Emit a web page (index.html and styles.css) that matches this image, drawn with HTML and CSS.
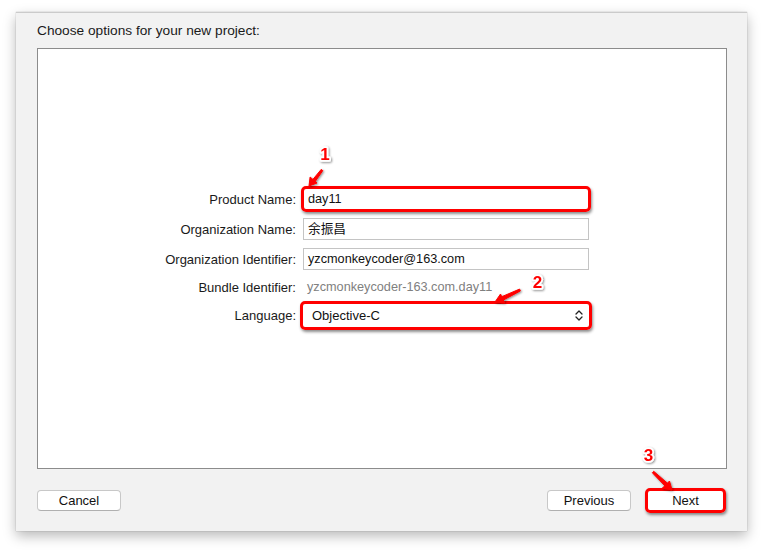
FILE: index.html
```html
<!DOCTYPE html>
<html>
<head>
<meta charset="utf-8">
<link rel="stylesheet" href="styles.css">
</head>
<body>
<div class="window">
  <div class="title">Choose options for your new project:</div>
  <div class="panel">
    <div class="form">
      <div class="label">Product Name:</div>
      <div class="field ring">day11</div>
      <div class="label">Organization Name:</div>
      <div class="field">余振昌</div>
      <div class="label">Organization Identifier:</div>
      <div class="field">yzcmonkeycoder@163.com</div>
      <div class="label">Bundle Identifier:</div>
      <div class="static">yzcmonkeycoder-163.com.day11</div>
      <div class="label">Language:</div>
      <div class="popup ring">
        <span>Objective-C</span>
        <svg class="chev" width="8" height="13" viewBox="0 0 8 13"><path d="M1 5 L4 2 L7 5 M1 8 L4 11 L7 8" fill="none" stroke="#222" stroke-width="1.3" stroke-linecap="round" stroke-linejoin="round"/></svg>
      </div>
    </div>
  </div>
  <div class="buttons">
    <div class="btn">Cancel</div>
    <div class="spacer"></div>
    <div class="btn">Previous</div>
    <div class="btn next ring">Next</div>
  </div>
</div>
<svg class="annot" width="764" height="552" viewBox="0 0 764 552">
  <defs>
    <filter id="sh" x="-50%" y="-50%" width="200%" height="200%">
      <feDropShadow dx="1" dy="1" stdDeviation="0.8" flood-color="#000" flood-opacity="0.45"/>
    </filter>
  </defs>
  <g filter="url(#sh)" fill="#f00" stroke="#f00">
    <polygon points="322.8,170.6 321.2,169.4 312,180.5 314.5,182.5" stroke-width="1" stroke-linejoin="round"/>
    <polygon points="309,186 317,183 310.1,177" stroke-width="1"/>
    <polygon points="520.4,290.9 519.6,289.1 501,297 502.5,300.5" stroke-width="1" stroke-linejoin="round"/>
    <polygon points="495,302 504.5,302.8 500.5,294" stroke-width="1"/>
    <polygon points="652.3,472.7 653.7,471.3 667.5,483.2 665,486" stroke-width="1" stroke-linejoin="round"/>
    <polygon points="672,490 662.5,488 669.5,481" stroke-width="1"/>
  </g>
  <g class="num" filter="url(#sh)">
    <text x="325" y="159.5">1</text>
    <text x="537.5" y="288">2</text>
    <text x="648.5" y="461">3</text>
  </g>
</svg>
</body>
</html>
```
FILE: styles.css
```css
html, body {
  margin: 0;
  padding: 0;
  background: #ffffff;
  width: 764px;
  height: 552px;
  overflow: hidden;
  font-family: "Liberation Sans", Arial, "Noto Sans CJK SC", sans-serif;
  font-size: 13px;
  color: #000;
}
.window {
  position: relative;
  margin: 12px 0 0 16px;
  width: 731px;
  height: 519px;
  box-sizing: border-box;
  background: #f2f2f2;
  border-top: 1px solid #cbcbcb;
  padding: 10px 20px 0 21px;
  box-shadow: 0 5px 12px rgba(0,0,0,0.28), 0 0 1px rgba(0,0,0,0.3);
}
.title {
  height: 16px;
  line-height: 16px;
  margin-bottom: 9px;
  font-size: 13.7px;
  color: #1a1a1a;
}
.panel {
  width: 690px;
  height: 421px;
  box-sizing: border-box;
  background: #fff;
  border: 1px solid #8c8c8c;
  padding-top: 139px;
}
.form {
  display: grid;
  grid-template-columns: 258px 286px;
  grid-template-rows: 22px 22px 22px 18px 23px;
  column-gap: 7px;
  row-gap: 8px;
}
.label {
  text-align: right;
  display: flex;
  align-items: center;
  justify-content: flex-end;
  color: #1a1a1a;
}
.field {
  position: relative;
  box-sizing: border-box;
  height: 22px;
  line-height: 20px;
  background: #fff;
  border: 1px solid #c4c4c4;
  padding: 0 4px;
  color: #111;
  font-size: 12.7px;
}
.static {
  display: flex;
  align-items: center;
  padding-left: 4px;
  font-size: 12.7px;
  color: #808080;
}
.popup {
  position: relative;
  box-sizing: border-box;
  height: 23px;
  background: #fff;
  border-radius: 3px;
  display: flex;
  align-items: center;
  justify-content: space-between;
  padding: 0 6px 0 9px;
  color: #111;
}
.chev { display: block; }
.ring::after {
  content: "";
  position: absolute;
  left: -3px;
  right: -3px;
  top: -3px;
  bottom: -3px;
  border: 3px solid #ff0000;
  border-radius: 5px;
  box-shadow: 1px 2px 3px rgba(0,0,0,0.45);
  pointer-events: none;
}
.buttons {
  display: flex;
  margin-top: 21px;
  padding-right: 3px;
  gap: 16px;
}
.spacer { flex: 1; }
.btn {
  position: relative;
  box-sizing: border-box;
  width: 84px;
  height: 21px;
  line-height: 19px;
  text-align: center;
  background: #fff;
  border: 1px solid #c8c8c8;
  border-bottom-color: #b0b0b0;
  border-radius: 4px;
  color: #111;
}
.btn.next {
  width: 77px;
  border-color: #fff;
}
.annot {
  position: absolute;
  left: 0;
  top: 0;
  pointer-events: none;
}
.num text {
  font-family: "Liberation Sans", Arial, sans-serif;
  font-weight: bold;
  font-size: 17px;
  text-anchor: middle;
  fill: #f00;
  stroke: #fff;
  stroke-width: 3.5px;
  paint-order: stroke;
  stroke-linejoin: round;
}
```
